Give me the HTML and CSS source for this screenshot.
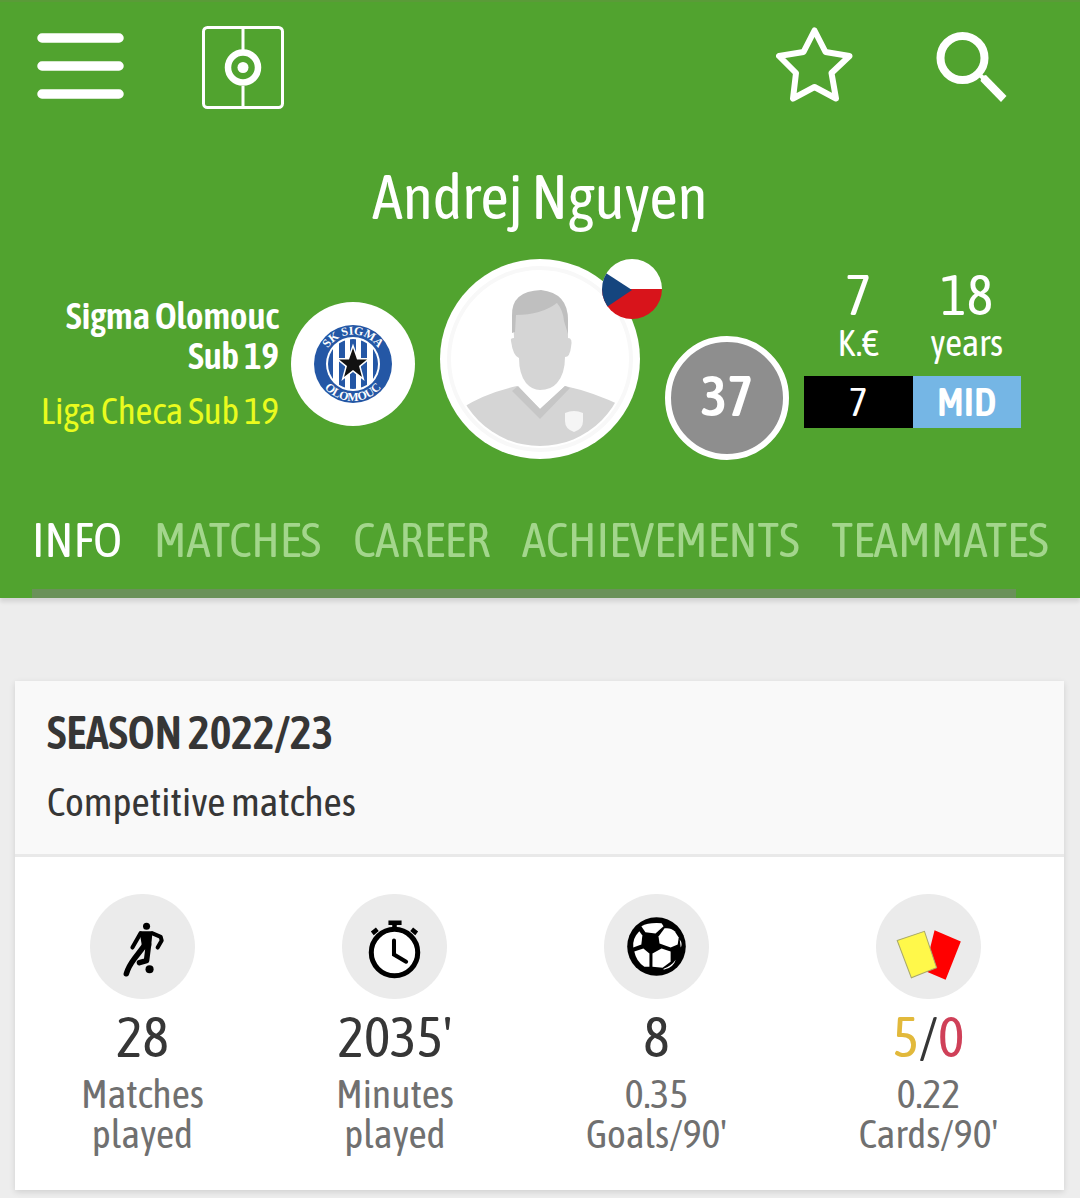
FILE: index.html
```
<!DOCTYPE html>
<html lang="en">
<head>
    <meta charset="UTF-8">
    <meta name="viewport" content="width=device-width, initial-scale=1.0">
    <title>Andrej Nguyen</title>
    <link rel="stylesheet" href="styles.css">
</head>
<body>
    <header class="header">
        <div class="top-bar">
            <div class="top-group left">
                <button type="button" class="icon-btn" aria-label="Menu">
                    <svg width="87" height="70" viewBox="0 0 87 70">
                        <path d="M5 5h77M5 33h77M5 61h77" stroke="#fff" stroke-width="9.500" stroke-linecap="round"/>
                    </svg>
                </button>
                <a href="#" class="icon-btn" aria-label="Home">
                    <svg width="82" height="83" viewBox="0 0 82 83" fill="none" stroke="#fff">
                        <rect x="1.500" y="1.500" width="79" height="80" rx="4" stroke-width="3"/>
                        <path d="M41 2v22M41 60v22" stroke-width="3"/>
                        <circle cx="41" cy="41.500" r="15" stroke-width="6.500"/>
                        <circle cx="41" cy="41.500" r="5.500" fill="#fff" stroke="none"/>
                    </svg>
                </a>
            </div>
            <div class="top-group right">
                <button type="button" class="icon-btn" aria-label="Favourite">
                    <svg width="77" height="82" viewBox="0 0 77 82">
                        <path d="M38.500 3.500L49.500 25L73.500 29L55.500 46L60 71.500L38.500 60L17 71.500L20 46L3 29L27.500 25Z" fill="none" stroke="#fff" stroke-width="6" stroke-linejoin="round"/>
                    </svg>
                </button>
                <button type="button" class="icon-btn" aria-label="Search">
                    <svg width="71" height="74" viewBox="0 0 71 74" fill="none" stroke="#fff">
                        <circle cx="26.500" cy="27" r="22" stroke-width="8"/>
                        <path d="M46 45L50 44L70.500 65L65 71L44.500 50Z" fill="#fff" stroke="none"/>
                        <path d="M42 42l6 6" stroke-width="4"/>
                    </svg>
                </button>
            </div>
        </div>

        <h1 class="player-name">Andrej Nguyen</h1>

        <div class="player">
            <div class="team">
                <a href="#" class="team-name">Sigma Olomouc<br>Sub 19</a>
                <a href="#" class="league">Liga Checa Sub 19</a>
            </div>
            <div class="pictures">
                <svg class="crest" viewBox="0 0 124 124" role="img" aria-label="SK Sigma Olomouc">
                    <defs>
                        <clipPath id="crestClip"><circle cx="62" cy="62" r="25"/></clipPath>
                        <path id="arcTop" d="M32.500 62a29.500 29.500 0 0 1 59 0"/>
                        <path id="arcBottom" d="M25 62a37 37 0 0 0 74 0"/>
                    </defs>
                    <circle cx="62" cy="62" r="62" fill="#fff"/>
                    <circle cx="62" cy="62" r="39" fill="#2457a5"/>
                    <circle cx="62" cy="62" r="27" fill="#fff"/>
                    <g clip-path="url(#crestClip)" fill="#2457a5">
                        <path d="M36 30h6v64h-6zM48 30h6v64h-6zM59 30h6v64h-6zM70 30h6v64h-6zM82 30h6v64h-6z"/>
                    </g>
                    <path d="M62 46L66 57.500H76L68 64L71 75L62 68L53 75L56 64L48 57.500H58Z" fill="#111" stroke="#fff" stroke-width="3" paint-order="stroke"/>
                    <text class="crest-text"><textPath href="#arcTop" startOffset="50%" text-anchor="middle">SK SIGMA</textPath></text>
                    <text class="crest-text"><textPath href="#arcBottom" startOffset="50%" text-anchor="middle">OLOMOUC</textPath></text>
                </svg>
                <div class="photo">
                    <svg viewBox="0 0 200 200" role="img" aria-label="Andrej Nguyen">
                        <defs>
                            <clipPath id="photoClip"><circle cx="100" cy="100" r="87"/></clipPath>
                        </defs>
                        <circle cx="100" cy="100" r="100" fill="#fff"/>
                        <circle cx="100" cy="100" r="91" fill="none" stroke="#f8f8f8" stroke-width="4"/>
                        <g clip-path="url(#photoClip)">
                            <path d="M20 150Q45 134 77 127L100 150L125 127Q153 133 182 147V200H20Z" fill="#d5d5d5"/>
                            <path d="M78 127L72 132L100 160L130 129L125 127L100 150Z" fill="#c6c6c6"/>
                        </g>
                        <path d="M73 55Q86 57 119 43Q128 50 128 62V79Q133 79 131 88Q130 98 125 98Q125 115 117 124Q111 131 100 131Q92 131 86 124Q79 115 79 99Q73 97 71 82Q70 79 74 79Z" fill="#d5d5d5"/>
                        <path d="M72 57Q71 32 101 31Q128 34 128 61V75L124 62Q123 51 117 44Q101 56 76 56L75 73L72 74Z" fill="#bfbfbf"/>
                        <path d="M125 154Q134 150 143 154V162Q143 170 134 173Q125 170 125 162Z" fill="#f5f5f5"/>
                    </svg>
                    <svg class="flag" viewBox="0 0 60 60" role="img" aria-label="Czech Republic">
                        <defs>
                            <clipPath id="flagClip"><circle cx="30" cy="30" r="30"/></clipPath>
                        </defs>
                        <g clip-path="url(#flagClip)">
                            <path d="M0 0h60v30H0z" fill="#fff"/>
                            <path d="M0 30h60v30H0z" fill="#d8141b"/>
                            <path d="M-13 3L30 31L-13 60z" fill="#15457e"/>
                        </g>
                    </svg>
                </div>
                <div class="rating">37</div>
            </div>
            <div class="facts">
                <div class="fact">
                    <span class="fact-value">7</span>
                    <span class="fact-unit">K.€</span>
                    <span class="box number">7</span>
                </div>
                <div class="fact">
                    <span class="fact-value">18</span>
                    <span class="fact-unit">years</span>
                    <span class="box position">MID</span>
                </div>
            </div>
        </div>

        <nav class="tabs">
            <a href="#" class="active">INFO</a>
            <a href="#">MATCHES</a>
            <a href="#">CAREER</a>
            <a href="#">ACHIEVEMENTS</a>
            <a href="#">TEAMMATES</a>
        </nav>
        <div class="tabs-scroll"></div>
    </header>

    <main class="content">
        <section class="card">
            <div class="card-head">
                <h2>SEASON 2022/23</h2>
                <p>Competitive matches</p>
            </div>
            <div class="stats">
                <div class="stat">
                    <svg class="stat-icon" viewBox="0 0 104 104">
                        <circle cx="52" cy="52" r="52" fill="#ebebeb"/>
                        <circle cx="56" cy="32" r="3.500"/>
                        <path d="M49 37H62L60.500 52L52 55Z"/>
                        <path d="M50 39L42 53M62 39L70 42.500L71 46L67 53" fill="none" stroke="#000" stroke-width="4" stroke-linecap="round" stroke-linejoin="round"/>
                        <path d="M54 51L44 64Q38 72 36 79M58 50L56 66L49 68" fill="none" stroke="#000" stroke-width="5.500" stroke-linecap="round" stroke-linejoin="round"/>
                        <circle cx="59" cy="74.500" r="4"/>
                    </svg>
                    <span class="stat-value">28</span>
                    <span class="stat-label">Matches<br>played</span>
                </div>
                <div class="stat">
                    <svg class="stat-icon" viewBox="0 0 104 104">
                        <circle cx="52" cy="52" r="52" fill="#ebebeb"/>
                        <circle cx="52" cy="58" r="23" fill="#fff" stroke="#000" stroke-width="5"/>
                        <path d="M46 28.500h13M52 29v6M30 39l5-4M74 39l-5-4" stroke="#000" stroke-width="4.500"/>
                        <path d="M51.500 46v14l12 7" fill="none" stroke="#000" stroke-width="4" stroke-linecap="round"/>
                    </svg>
                    <span class="stat-value">2035'</span>
                    <span class="stat-label">Minutes<br>played</span>
                </div>
                <div class="stat">
                    <svg class="stat-icon" viewBox="0 0 104 104">
                        <circle cx="52" cy="52" r="52" fill="#ebebeb"/>
                        <circle cx="52" cy="52" r="29"/>
                        <g fill="#fff">
                            <path d="M37 32Q44 28 57 29L59 32L51 39L41 38Z"/>
                            <path d="M60 34Q66 33 70 37L74 43L73 50L66 53L55 49L54 42Z"/>
                            <path d="M35 37L38 41L37 50L29 53Q28 44 35 37Z"/>
                            <path d="M30 57L39 54L45 59L45 72L40 72Q32 67 30 57Z"/>
                            <path d="M48 59L57 54L66 57L66 67L58 73L48 72Z"/>
                            <path d="M59 74Q67 71 71 65Q69 73 59 75ZM75 45Q78 49 76 53Z"/>
                        </g>
                    </svg>
                    <span class="stat-value">8</span>
                    <span class="stat-label">0.35<br>Goals/90'</span>
                </div>
                <div class="stat">
                    <svg class="stat-icon" viewBox="0 0 104 104">
                        <circle cx="52" cy="52" r="52" fill="#ebebeb"/>
                        <path d="M58 36L84 47L69 85L48 76Z" fill="#f00"/>
                        <path d="M21 46L48 37L60 73L35 83Z" fill="#fff84a" stroke="#a9a96b" stroke-width="1"/>
                    </svg>
                    <span class="stat-value"><span class="yellow">5</span>/<span class="red">0</span></span>
                    <span class="stat-label">0.22<br>Cards/90'</span>
                </div>
            </div>
        </section>
    </main>
</body>
</html>
```
FILE: styles.css
```
* {
    margin: 0;
    padding: 0;
    box-sizing: border-box;
}
body {
    background-color: #ededed;
    font-family: "Asap Condensed", "Liberation Sans Narrow", "Open Sans Condensed", "Liberation Sans", sans-serif;
    color: #363636;
}
a {
    color: inherit;
    text-decoration: none;
}
svg {
    display: block;
}
.header {
    background: #51a32f;
    color: white;
    border-top: 2px solid #5a9b38;
    box-shadow: 0 4px 4px rgba(0, 0, 0, 0.1);
}
.top-bar {
    display: flex;
    justify-content: space-between;
    align-items: center;
    padding: 24px 73px 0 37px;
}
.top-group {
    display: flex;
    align-items: center;
}
.top-group.left {
    gap: 78px;
}
.top-group.right {
    gap: 83px;
}
.icon-btn {
    background: none;
    border: none;
    cursor: pointer;
}
.player-name {
    margin-top: 48px;
    font-size: 62px;
    line-height: 80px;
    font-weight: normal;
    text-align: center;
}
.player {
    display: grid;
    grid-template-columns: 1fr auto 1fr;
    margin-top: 22px;
}
.team {
    display: flex;
    flex-direction: column;
    padding: 37px 12px 0 0;
    text-align: right;
    font-size: 37px;
    line-height: 40px;
}
.team-name {
    font-weight: 600;
}
.league {
    margin-top: 15px;
    color: #e9fb1e;
}
.pictures {
    display: flex;
    gap: 25px;
}
.crest {
    width: 124px;
    height: 124px;
    margin-top: 43px;
}
.crest-text {
    font-family: "Liberation Serif", serif;
    font-size: 12px;
    font-weight: bold;
    fill: white;
}
.photo {
    position: relative;
    width: 200px;
    height: 201px;
}
.flag {
    position: absolute;
    top: 0;
    right: -22px;
    width: 60px;
    height: 60px;
}
.rating {
    align-self: flex-end;
    width: 124px;
    height: 124px;
    border: 6px solid white;
    border-radius: 50%;
    background: #8e8e8e;
    font-size: 56px;
    line-height: 108px;
    font-weight: 600;
    text-align: center;
}
.facts {
    display: flex;
    padding: 8px 59px 0 15px;
}
.fact {
    flex: 1;
    display: flex;
    flex-direction: column;
    text-align: center;
}
.fact-value {
    font-size: 56px;
    line-height: 56px;
}
.fact-unit {
    font-size: 37px;
    line-height: 40px;
    margin-bottom: 13px;
}
.box {
    font-size: 40px;
    line-height: 52px;
}
.number {
    background: black;
}
.position {
    background: #75b6e5;
    font-weight: 600;
}
.tabs {
    display: flex;
    gap: 32px;
    margin-top: 49px;
    padding: 0 30px 0 32px;
    font-size: 49px;
    line-height: 60px;
    white-space: nowrap;
    overflow: hidden;
}
.tabs a {
    color: #a3d68c;
}
.tabs .active {
    color: white;
}
.tabs-scroll {
    height: 9px;
    margin: 20px 64px 0 32px;
    background: #6a9159;
}
.content {
    padding: 83px 16px 8px 15px;
}
.card {
    background: white;
    box-shadow: 0 2px 6px rgba(0, 0, 0, 0.12);
}
.card-head {
    background: #f9f9f9;
    border-bottom: 3px solid #e9e9e9;
    padding: 22px 32px;
}
.card-head h2 {
    font-size: 46px;
    line-height: 60px;
    font-weight: 600;
}
.card-head p {
    margin-top: 9px;
    font-size: 40px;
    line-height: 60px;
}
.stats {
    display: flex;
    justify-content: space-around;
    padding: 37px 0 36px;
}
.stat {
    display: flex;
    flex-direction: column;
    align-items: center;
    text-align: center;
}
.stat-icon {
    width: 105px;
    height: 105px;
}
.stat-value {
    margin-top: 8px;
    font-size: 56px;
    line-height: 60px;
}
.stat-label {
    margin-top: 7px;
    font-size: 40px;
    line-height: 40px;
    color: #707070;
}
.yellow {
    color: #e2b93b;
}
.red {
    color: #cf4058;
}
```
